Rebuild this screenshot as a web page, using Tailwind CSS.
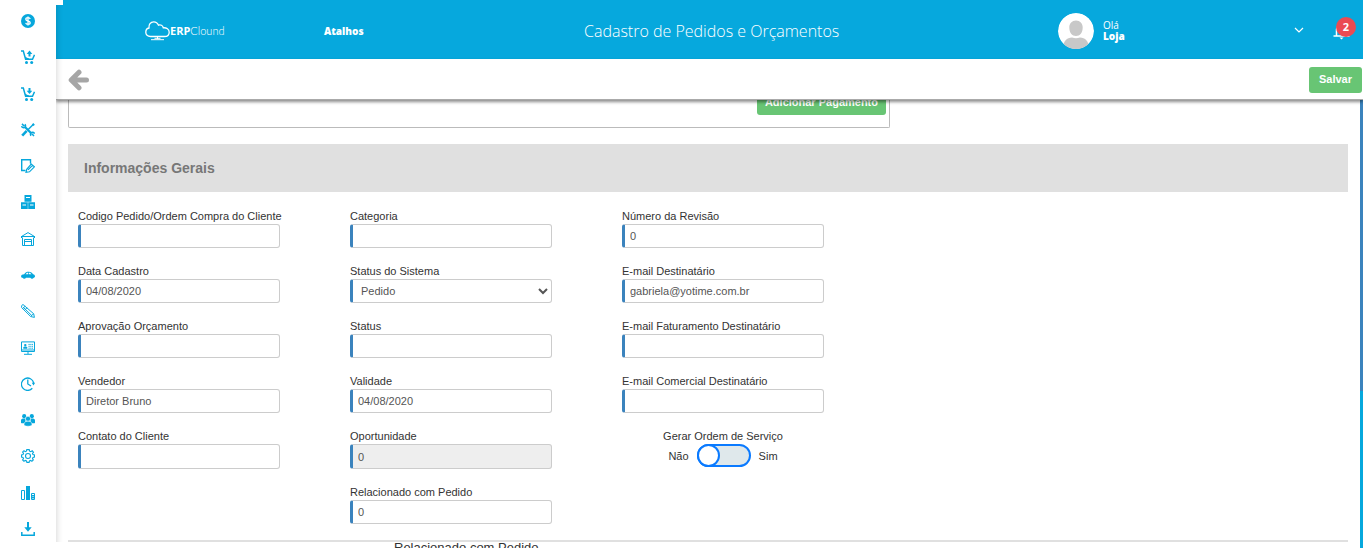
<!DOCTYPE html>
<html lang="pt-BR">
<head>
    <meta charset="UTF-8">
    <meta name="viewport" content="width=device-width, initial-scale=1.0">
    <title>Cadastro de Pedidos e Orçamentos</title>
    <script src="https://cdn.jsdelivr.net/npm/@tailwindcss/browser@4"></script>
</head>
<body class="flex h-screen overflow-hidden bg-white font-['Liberation_Sans',Arial,sans-serif] text-[11px] text-[#333]">

    <!-- Sidebar -->
    <nav class="relative z-30 flex w-14 shrink-0 flex-col items-center justify-between bg-white pt-[14px] pb-3 text-[#06a7dc] shadow-[0_0_7px_rgba(0,0,0,0.2)]">
        <div class="absolute top-0 left-14 h-[5px] w-[7px] bg-white"></div>
        <div class="absolute bottom-0 left-14 h-[6px] w-[7px] bg-white"></div>
        <a href="#" aria-label="Financeiro"><svg class="size-[14px]" viewBox="0 0 14 14" fill="none"><circle cx="7" cy="7" r="7" fill="currentColor"/><path d="M9.200 5C8.900 4 8.200 3.700 7 3.700C5.600 3.700 4.800 4.400 4.800 5.300C4.800 7.600 9.200 6.400 9.200 8.700C9.200 9.700 8.300 10.300 7 10.300C5.800 10.300 5 9.900 4.700 8.900M7 2.500V11.500" stroke="#fff" stroke-width="1.300"/></svg></a>
        <a href="#" aria-label="Vendas"><svg class="size-[14px]" viewBox="0 0 14 14" fill="none" stroke="currentColor"><path d="M0 1H2.300L4.600 9.300H11.500L13.500 4.800M3.800 7C5 8.600 6.500 9 8 9" stroke-width="1.500"/><path d="M8.500 6.500V2" stroke-width="2"/><path d="M5.700 4L8.500 .6L11.300 4Z" fill="currentColor" stroke="none"/><circle cx="5.500" cy="12.400" r="1.500" fill="currentColor" stroke="none"/><circle cx="10.700" cy="12.400" r="1.500" fill="currentColor" stroke="none"/></svg></a>
        <a href="#" aria-label="Compras"><svg class="size-[14px]" viewBox="0 0 14 14" fill="none" stroke="currentColor"><path d="M0 1H2.300L4.600 9.300H11.500L13.500 4.800M3.800 7C5 8.600 6.500 9 8 9" stroke-width="1.500"/><path d="M8.500 1V5" stroke-width="2"/><path d="M5.700 3.700L8.500 7L11.300 3.700Z" fill="currentColor" stroke="none"/><circle cx="5.500" cy="12.400" r="1.500" fill="currentColor" stroke="none"/><circle cx="10.700" cy="12.400" r="1.500" fill="currentColor" stroke="none"/></svg></a>
        <a href="#" aria-label="Serviços"><svg class="size-[14px]" viewBox="0 0 14 14" fill="none" stroke="currentColor"><path d="M4 4L10.500 10.500" stroke-width="2.200"/><path d="M1 .9L3.300 3.200M3.900 1.200C5 2.500 4.600 4.200 3.300 4.600C2 5 .8 4.300 .6 3.200M13 13L10.800 10.800M10 12.800C9 11.500 9.500 9.800 10.700 9.400C12 9 13.200 9.600 13.500 10.700" stroke-width="1.500"/><path d="M12.900 .8L6.500 7.300" stroke-width="1.400"/><path d="M5.700 7.800L1.200 12.600" stroke-width="2.600"/><path d="M11.500 .8L13.200 2.400" stroke-width="1.800"/></svg></a>
        <a href="#" aria-label="Contratos"><svg class="size-[14px]" viewBox="0 0 14 14" fill="none" stroke="currentColor"><path d="M9.500 4.500V.7H.7V11.500H4.500" stroke-width="1.400"/><path d="M9.500 4.500L13.400 7.800L8.500 12.800L5 13.300L5.700 10.300L10.200 5.200M7 10.800L11.500 6.300" stroke-width="1.200"/></svg></a>
        <a href="#" aria-label="Estoque"><svg class="size-[14px]" viewBox="0 0 14 14" fill="currentColor"><path d="M3.500 0H10.500V6.800H3.500ZM0 7.300H6.800V14H0ZM7.200 7.300H14V14H7.200Z"/><path d="M5 2H9V3H5ZM1.500 9.500H5V10.500H1.500ZM9 9.500H12.500V10.500H9Z" fill="#fff"/></svg></a>
        <a href="#" aria-label="Armazém"><svg class="size-[14px]" viewBox="0 0 14 14" fill="none" stroke="currentColor" stroke-width="1"><path d="M.5 4.500L7 .6L13.500 4.500M0 4.500H14M.5 4.500V6M13.500 4.500V6M1.500 5.500V13.500H12.500V5.500M3.500 13.500V7.500H10.500V13.500M3.500 9.500H10.500"/></svg></a>
        <a href="#" aria-label="Frota"><svg class="size-[14px]" viewBox="0 0 14 14" fill="currentColor"><path d="M0 8.300C0 6.800 1.500 6.500 3.200 6.200C4.500 4.300 5.500 3.800 7.800 3.800C10 3.800 11.200 5 12 6.200C13.500 6.500 14 7 14 8.800L13 9.700H.7Z"/><circle cx="3.300" cy="9.200" r="1.500"/><circle cx="11" cy="9.200" r="1.500"/><path d="M4.500 6.200L6 4.800H7V6.200ZM7.700 4.800H9L10.500 6.200H7.700Z" fill="#fff"/></svg></a>
        <a href="#" aria-label="Edição"><svg class="size-[14px]" viewBox="0 0 14 14" fill="none" stroke="currentColor" stroke-width="1"><path d="M.7 1.500L2 .5L12.700 9.800L13.400 13.400L9.600 12.500L.6 3.500ZM2.300 3.300L10.800 11.600M4.200 2.200L1.500 4.600M6 3.700L3.600 6.400M12.500 9.800L9.800 12.300"/></svg></a>
        <a href="#" aria-label="Cadastros"><svg class="size-[14px]" viewBox="0 0 14 14" fill="none" stroke="currentColor" stroke-width="1"><path d="M.5 .9H13.500V10.500H.5ZM.5 9H13.500M7 10.700V13M3 13.300H11"/><path d="M7.500 3.400H12M7.500 5.300H12M7.500 7.200H12" stroke-dasharray="1.200 .6"/><circle cx="4.300" cy="4.100" r="1.200" fill="currentColor" stroke="none"/><path d="M2.300 7.800V6.200C2.800 5.300 5.800 5.300 6.300 6.200V7.800Z" fill="currentColor" stroke="none"/></svg></a>
        <a href="#" aria-label="Histórico"><svg class="size-[14px]" viewBox="0 0 14 14" fill="none" stroke="currentColor" stroke-width="1.300"><path d="M11.300 11.300A6.200 6.200 0 1 1 12.700 6M6.800 2.500V7L10 9"/><path d="M10.800 5.700H14.200L12.500 8.500Z" fill="currentColor" stroke="none"/></svg></a>
        <a href="#" aria-label="Equipe"><svg class="size-[14px]" viewBox="0 0 14 14" fill="currentColor"><circle cx="3.200" cy="3.200" r="2.100"/><circle cx="10.800" cy="3.200" r="2.100"/><path d="M0 9.800V7.500C0 5.700 1.500 5.300 4.500 5.500V10.300H.5ZM14 9.800V7.500C14 5.700 12.500 5.300 9.500 5.500V10.300H13.500Z"/><circle cx="7" cy="5.800" r="2.600" stroke="#fff" stroke-width=".6"/><path d="M3 11.500C3 9 4.500 8.200 7 8.200S11 9 11 11.500C11 12.700 9.500 13.200 7 13.200S3 12.700 3 11.500Z" stroke="#fff" stroke-width=".5"/></svg></a>
        <a href="#" aria-label="Configurações"><svg class="size-[14px]" viewBox="0 0 14 14" fill="none" stroke="currentColor" stroke-width="1.100"><path d="M5.800 .6H8.200L8.600 2.200L9.800 2.700L11.200 1.800L12.500 3.200L11.500 4.500L12 5.600L13.500 6V8L12 8.400L11.500 9.600L12.300 11L10.900 12.300L9.600 11.400L8.500 11.900L8.100 13.400H5.900L5.500 11.900L4.300 11.400L3 12.300L1.600 10.900L2.500 9.600L2 8.400L.5 8V6L2 5.600L2.500 4.400L1.600 3L3 1.700L4.300 2.600L5.400 2.200Z"/><circle cx="7" cy="7" r="2.500"/></svg></a>
        <a href="#" aria-label="Relatórios"><svg class="size-[14px]" viewBox="0 0 14 14" fill="none" stroke="currentColor" stroke-width="1"><path d="M.5 4.500H3.500V13.500H.5ZM10.500 7.500H13.500V13.500H10.500ZM10.500 9.500H13.500M10.500 11.500H13.500M12 9.500V13.500"/><path d="M5 0H9V14H5Z" fill="currentColor" stroke="none"/></svg></a>
        <a href="#" aria-label="Exportar"><svg class="size-[14px]" viewBox="0 0 14 14" fill="none" stroke="currentColor"><path d="M.8 10V13.200H13.200V10" stroke-width="1.500"/><path d="M7 0V6" stroke-width="2"/><path d="M3.300 5.300H10.700L7 9.700Z" fill="currentColor" stroke="none"/></svg></a>
    </nav>

    <div class="flex min-w-0 flex-1 flex-col">
        <!-- Top bar -->
        <header class="grid h-[59px] shrink-0 grid-cols-[268px_260px_1fr_305px] items-center bg-[#06a8dd] pt-[3px] font-['Open_Sans',sans-serif] text-white">
            <a href="#" class="flex items-center pl-[89px]">
                <svg class="h-5 w-[25px]" viewBox="0 0 25 20" fill="none" stroke="#fff" stroke-width="1.300"><path d="M5.500 15.500C2.500 15.500 .8 13.500 .8 11.200C.8 9 2.200 7.300 4 7C3.500 3.500 5.500 .8 8.700 .8C11.200 .8 12.700 2.200 13.500 4.200C15.500 3.300 17.800 4.500 18.300 6.800C21.500 6.500 24.200 8.300 24.200 11.200C24.200 13.800 22.500 15.500 19.500 15.500Z"/><path d="M12.500 15.500V18M6 18.700H19M9.500 17.300H15.500" stroke-width="1"/></svg>
                <span class="text-[11px]"><b>ERP</b><span class="font-['Lato',sans-serif] font-light">Clound</span></span>
            </a>
            <a href="#" class="text-[10px] font-extrabold">Atalhos</a>
            <h1 class="text-[16px] font-light">Cadastro de Pedidos e Orçamentos</h1>
            <div class="flex items-center">
                <svg class="size-9 shrink-0 rounded-full" viewBox="0 0 36 36"><circle cx="18" cy="18" r="18" fill="#fff"/><path d="M18 7.500C22 7.500 24.700 10.500 24.700 14.500C24.700 19.500 22 23 18 23S11.300 19.500 11.300 14.500C11.300 10.500 14 7.500 18 7.500ZM5 36C5 27.500 9 25 14 24.500Q18 26 22 24.500C27 25 31 27.500 31 36Z" fill="#c8c8c8"/></svg>
                <div class="ml-[9px] text-[10px] leading-[11px]">
                    <div>Olá</div>
                    <div class="font-extrabold">Loja</div>
                </div>
                <button type="button" aria-label="Menu do usuário" class="ml-auto"><svg class="size-[10px]" viewBox="0 0 10 10" fill="none" stroke="#fff" stroke-width="1.200"><path d="M1 2L5 6L9 2"/></svg></button>
                <button type="button" aria-label="Notificações" class="relative mr-3 ml-[29px]">
                    <svg class="h-[18px] w-[18px]" viewBox="0 0 18 18" fill="none" stroke="#fff" stroke-width="1.500"><path d="M.5 14H16.500M3.500 13.500V7.500C3.500 4.500 6 2.500 9 2.500S14.500 4.500 14.500 7.500V13.500"/><path d="M6.500 15.500H10.500L8.500 17.500Z" fill="#fff" stroke="none"/></svg>
                    <span class="absolute -top-[5px] left-[3px] flex h-5 w-5 items-center justify-center rounded-full bg-[#ea4a52] text-[11px] font-bold">2</span>
                </button>
            </div>
        </header>

        <!-- Action bar -->
        <div class="relative z-20 flex h-[41px] shrink-0 items-center justify-between border-b border-[#aaa] bg-white pt-px pr-px pl-3 shadow-[0_2px_3px_rgba(0,0,0,0.45)]">
            <button type="button" aria-label="Voltar"><svg class="h-[22px] w-[21px]" viewBox="0 0 21 22" fill="none" stroke="#a6a6a6" stroke-width="5" stroke-linecap="round" stroke-linejoin="round"><path d="M11 3.200L3.200 11L11 18.800M4.500 11H18.500"/></svg></button>
            <button type="button" class="h-[26px] rounded-[3px] bg-[#68c574] px-[10px] text-[11px] font-bold text-white">Salvar</button>
        </div>

        <div class="flex min-h-0 flex-1">
            <main class="min-w-0 flex-1 overflow-hidden px-3">
                <section class="flex h-7 max-w-[822px] items-start justify-end rounded-b-[2px] border border-t-0 border-[#bbb] pr-[3px]">
                    <button type="button" class="-mt-[11px] h-[26px] rounded-[3px] bg-[#68c574] px-2 text-[11px] font-bold text-white">Adicionar Pagamento</button>
                </section>

                <h2 class="mt-4 flex h-12 items-center bg-[#e0e0e0] px-4 text-[14px] font-bold text-[#777]">Informações Gerais</h2>

                <form class="mt-4 ml-[10px] grid max-w-[746px] grid-cols-3 gap-x-[70px] gap-y-[15px] leading-4">
                    <div>
                        <label for="codigo" class="block whitespace-nowrap">Codigo Pedido/Ordem Compra do Cliente</label>
                        <input id="codigo" type="text" class="block h-6 w-full rounded-[3px] border border-l-[3px] border-[#ccc] border-l-[#3b83bd] px-1 text-[#555]">
                    </div>
                    <div>
                        <label for="categoria" class="block">Categoria</label>
                        <input id="categoria" type="text" class="block h-6 w-full rounded-[3px] border border-l-[3px] border-[#ccc] border-l-[#3b83bd] px-1 text-[#555]">
                    </div>
                    <div>
                        <label for="revisao" class="block">Número da Revisão</label>
                        <input id="revisao" type="text" value="0" class="block h-6 w-full rounded-[3px] border border-l-[3px] border-[#ccc] border-l-[#3b83bd] px-[5px] text-[#555]">
                    </div>

                    <div>
                        <label for="data" class="block">Data Cadastro</label>
                        <input id="data" type="text" value="04/08/2020" class="block h-6 w-full rounded-[3px] border border-l-[3px] border-[#ccc] border-l-[#3b83bd] px-[5px] text-[#555]">
                    </div>
                    <div>
                        <label for="sistema" class="block">Status do Sistema</label>
                        <select id="sistema" class="block h-6 w-full rounded-[3px] border border-l-[3px] border-[#ccc] border-l-[#3b83bd] bg-white pl-1 text-[#555]">
                            <option>Pedido</option>
                            <option>Orçamento</option>
                        </select>
                    </div>
                    <div>
                        <label for="email" class="block">E-mail Destinatário</label>
                        <input id="email" type="email" value="gabriela@yotime.com.br" class="block h-6 w-full rounded-[3px] border border-l-[3px] border-[#ccc] border-l-[#3b83bd] px-[5px] text-[#555]">
                    </div>

                    <div>
                        <label for="aprovacao" class="block">Aprovação Orçamento</label>
                        <input id="aprovacao" type="text" class="block h-6 w-full rounded-[3px] border border-l-[3px] border-[#ccc] border-l-[#3b83bd] px-[5px] text-[#555]">
                    </div>
                    <div>
                        <label for="status" class="block">Status</label>
                        <input id="status" type="text" class="block h-6 w-full rounded-[3px] border border-l-[3px] border-[#ccc] border-l-[#3b83bd] px-[5px] text-[#555]">
                    </div>
                    <div>
                        <label for="faturamento" class="block">E-mail Faturamento Destinatário</label>
                        <input id="faturamento" type="email" class="block h-6 w-full rounded-[3px] border border-l-[3px] border-[#ccc] border-l-[#3b83bd] px-[5px] text-[#555]">
                    </div>

                    <div>
                        <label for="vendedor" class="block">Vendedor</label>
                        <input id="vendedor" type="text" value="Diretor Bruno" class="block h-6 w-full rounded-[3px] border border-l-[3px] border-[#ccc] border-l-[#3b83bd] px-[5px] text-[#555]">
                    </div>
                    <div>
                        <label for="validade" class="block">Validade</label>
                        <input id="validade" type="text" value="04/08/2020" class="block h-6 w-full rounded-[3px] border border-l-[3px] border-[#ccc] border-l-[#3b83bd] px-[5px] text-[#555]">
                    </div>
                    <div>
                        <label for="comercial" class="block">E-mail Comercial Destinatário</label>
                        <input id="comercial" type="email" class="block h-6 w-full rounded-[3px] border border-l-[3px] border-[#ccc] border-l-[#3b83bd] px-[5px] text-[#555]">
                    </div>

                    <div>
                        <label for="contato" class="block">Contato do Cliente</label>
                        <input id="contato" type="text" class="block h-[25px] w-full rounded-[3px] border border-l-[3px] border-[#ccc] border-l-[#3b83bd] px-[5px] text-[#555]">
                    </div>
                    <div>
                        <label for="oportunidade" class="block">Oportunidade</label>
                        <input id="oportunidade" type="text" value="0" readonly class="block h-[25px] w-full rounded-[3px] border border-l-[3px] border-[#ccc] border-l-[#3b83bd] bg-[#eee] px-[5px] text-[#555]">
                    </div>
                    <div class="flex flex-col items-center">
                        <label for="ordem">Gerar Ordem de Serviço</label>
                        <div class="flex items-center gap-2">
                            <span>Não</span>
                            <input id="ordem" type="checkbox" class="relative h-[23px] w-[54px] appearance-none rounded-full border-2 border-[#0a7aff] bg-[#dfe8eb] before:absolute before:-top-[2px] before:-left-[2px] before:size-[23px] before:rounded-full before:border-2 before:border-[#0a7aff] before:bg-white checked:before:left-[29px]">
                            <span>Sim</span>
                        </div>
                    </div>

                    <div class="col-start-2">
                        <label for="relacionado" class="block">Relacionado com Pedido</label>
                        <input id="relacionado" type="text" value="0" class="block h-6 w-full rounded-[3px] border border-l-[3px] border-[#ccc] border-l-[#3b83bd] px-[5px] text-[#555]">
                    </div>
                </form>

                <section class="mt-4 border-t-2 border-[#e0e0e0] pl-[326px] text-[13px] leading-3">
                    <h3>Relacionado com Pedido</h3>
                </section>
            </main>

            <div class="flex w-[3px] shrink-0 flex-col">
                <div class="flex-[13] bg-[#3b83bd]"></div>
                <div class="flex-[7] bg-[#06a8dd]"></div>
            </div>
        </div>
    </div>
</body>
</html>
